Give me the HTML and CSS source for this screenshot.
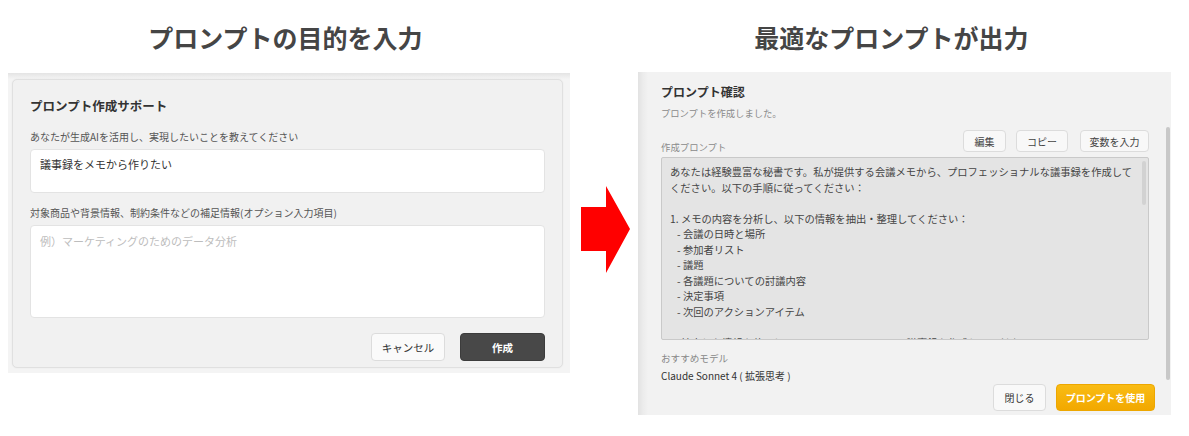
FILE: index.html
```html
<!DOCTYPE html>
<html lang="ja">
<head>
<meta charset="UTF-8">
<title>プロンプト作成サポート</title>
<link rel="stylesheet" href="styles.css">
</head>
<body>

<main class="page">
    <section class="side side-input">
        <h1 class="side-title">プロンプトの目的を入力</h1>
        <div class="shot shot-input">
            <div class="card">
                <h2 class="card-title">プロンプト作成サポート</h2>
                <label class="field-label">あなたが生成AIを活用し、実現したいことを教えてください</label>
                <div class="input input-main">議事録をメモから作りたい</div>
                <label class="field-label field-label-second">対象商品や背景情報、制約条件などの補足情報(オプション入力項目)</label>
                <div class="input input-extra">例）マーケティングのためのデータ分析</div>
                <div class="card-actions">
                    <button class="btn btn-cancel">キャンセル</button>
                    <button class="btn btn-create">作成</button>
                </div>
            </div>
        </div>
    </section>

    <svg class="arrow" width="49" height="87" viewBox="0 0 49 87">
        <polygon points="0,21 25,21 25,0 49,43 25,87 25,65 0,65" fill="#ff0000"/>
    </svg>

    <section class="side side-output">
        <h1 class="side-title">最適なプロンプトが出力</h1>
        <div class="shot shot-output">
            <h2 class="confirm-title">プロンプト確認</h2>
            <p class="confirm-sub">プロンプトを作成しました。</p>
            <div class="prompt-head">
                <span class="prompt-label">作成プロンプト</span>
                <div class="tools">
                    <button class="tool tool-edit">編集</button>
                    <button class="tool tool-copy">コピー</button>
                    <button class="tool tool-vars">変数を入力</button>
                </div>
            </div>
            <div class="prompt-box">
                <div class="line">あなたは経験豊富な秘書です。私が提供する会議メモから、プロフェッショナルな議事録を作成して</div>
                <div class="line">ください。以下の手順に従ってください：</div>
                <div class="line">&nbsp;</div>
                <div class="line">1. メモの内容を分析し、以下の情報を抽出・整理してください：</div>
                <div class="line item">- 会議の日時と場所</div>
                <div class="line item">- 参加者リスト</div>
                <div class="line item">- 議題</div>
                <div class="line item">- 各議題についての討議内容</div>
                <div class="line item">- 決定事項</div>
                <div class="line item">- 次回のアクションアイテム</div>
                <div class="line">&nbsp;</div>
                <div class="line">2. 抽出した情報を使用して、以下のフォーマットで議事録を作成してください：</div>
                <span class="box-thumb"></span>
            </div>
            <div class="model-label">おすすめモデル</div>
            <div class="model-name">Claude Sonnet 4 ( 拡張思考 )</div>
            <div class="footer">
                <button class="btn-close">閉じる</button>
                <button class="btn-use">プロンプトを使用</button>
            </div>
            <span class="scroll-thumb"></span>
        </div>
    </section>
</main>

</body>
</html>
```

FILE: styles.css
```css
body {
    margin: 0;
    background: #fff;
    font-family: "Noto Sans CJK JP", "Noto Sans", sans-serif;
    color: #333;
}
.page {
    display: flex;
    align-items: flex-start;
    width: 1189px;
    height: 436px;
    overflow: hidden;
}
.side-input { margin-left: 8px; width: 562px; }
.side-output { margin-left: 8px; width: 533px; }
.side-title {
    margin: 0;
    height: 73px;
    box-sizing: border-box;
    padding-top: 22px;
    font-size: 25px;
    line-height: 30px;
    font-weight: 700;
    color: #454545;
    text-align: center;
}
.side-input .side-title { padding-right: 7px; }
.side-output .side-title { height: 72px; padding-right: 26px; }

/* left screenshot */
.shot-input {
    height: 300px;
    box-sizing: border-box;
    padding: 6px 7px 5px 4px;
    background: linear-gradient(to bottom, #e4e4e4 0, #f4f4f4 6px) #f4f4f4;
}
.card {
    height: 100%;
    box-sizing: border-box;
    padding: 17px 17px 0;
    background: #f1f1f1;
    border: 1px solid #e0e0e0;
    border-radius: 5px;
    box-shadow: 0 0 2px rgba(0, 0, 0, 0.06);
}
.card-title {
    margin: 0;
    font-size: 12.5px;
    line-height: 18px;
    font-weight: 700;
    color: #333;
}
.field-label {
    display: block;
    margin-top: 15px;
    font-size: 10px;
    line-height: 14px;
    color: #555;
}
.field-label-second { margin-top: 13px; }
.input {
    margin-top: 5px;
    box-sizing: border-box;
    padding: 6px 9px;
    background: #fff;
    border: 1px solid #e3e3e3;
    border-radius: 4px;
    font-size: 11px;
    line-height: 16px;
    color: #333;
}
.input-main { height: 44px; }
.input-extra { height: 93px; padding-top: 7px; color: #bdbdbd; }
.card-actions {
    display: flex;
    justify-content: flex-end;
    gap: 15px;
    margin-top: 15px;
}
.btn {
    height: 28px;
    padding: 0;
    border-radius: 4px;
    font-family: inherit;
    font-size: 10.5px;
}
.btn-cancel {
    width: 74px;
    background: #fafafa;
    border: 1px solid #dcdcdc;
    color: #333;
}
.btn-create {
    width: 85px;
    background: #484848;
    border: 1px solid #3c3c3c;
    color: #fff;
    font-weight: 700;
}

.arrow { margin: 186px 0 0 11px; flex-shrink: 0; }

/* right screenshot */
.shot-output {
    position: relative;
    height: 343px;
    box-sizing: border-box;
    padding: 0 22px 0 23px;
    background: linear-gradient(to right, #e2e2e2 0, #ececec 5px, #f2f2f2 10px) #f2f2f2;
}
.confirm-title {
    margin: 0;
    padding-top: 11px;
    font-size: 12px;
    line-height: 18px;
    font-weight: 700;
    color: #333;
}
.confirm-sub {
    margin: 5px 0 0;
    font-size: 9.3px;
    line-height: 14px;
    color: #8a8a8a;
}
.prompt-head {
    display: flex;
    justify-content: space-between;
    align-items: flex-end;
    margin-top: 10px;
}
.prompt-label {
    margin-bottom: -2px;
    font-size: 9.4px;
    line-height: 14px;
    color: #8a8a8a;
}
.tools { display: flex; }
.tool {
    height: 22px;
    padding: 0;
    margin-left: 10px;
    background: #f8f8f8;
    border: 1px solid #dcdcdc;
    border-radius: 4px;
    font-family: inherit;
    font-size: 10px;
    color: #444;
}
.tool-edit { width: 43px; }
.tool-copy { width: 52px; }
.tool-vars { width: 69px; margin-left: 12px; }
.prompt-box {
    position: relative;
    margin-top: 5px;
    height: 183px;
    box-sizing: border-box;
    padding: 6px 8px;
    overflow: hidden;
    background: #e4e4e4;
    border: 1px solid #c9c9c9;
    border-radius: 2px;
    font-size: 10.3px;
    line-height: 15.5px;
    color: #444;
}
.line { white-space: nowrap; }
.line.item { padding-left: 7px; }
.box-thumb {
    position: absolute;
    top: 3px;
    right: 2px;
    width: 4px;
    height: 44px;
    background: #d2d2d2;
    border-radius: 2px;
}
.model-label {
    margin-top: 11px;
    font-size: 9.6px;
    line-height: 14px;
    color: #888;
}
.model-name {
    margin-top: 4px;
    font-size: 10px;
    line-height: 14px;
    color: #333;
}
.footer {
    display: flex;
    justify-content: flex-end;
    gap: 10px;
    margin: 1px -6px 0 0;
}
.btn-close, .btn-use {
    height: 27px;
    padding: 0;
    border-radius: 4px;
    font-family: inherit;
    font-size: 10px;
}
.btn-close {
    width: 53px;
    background: #f9f9f9;
    border: 1px solid #dcdcdc;
    color: #333;
}
.btn-use {
    width: 99px;
    background: linear-gradient(#f9bc14, #f2a800);
    border: 1px solid #eda700;
    color: #fff;
    font-weight: 700;
}
.scroll-thumb {
    position: absolute;
    top: 55px;
    right: 1px;
    width: 4px;
    height: 253px;
    background: #c8c8c8;
    border-radius: 2px;
}
```
